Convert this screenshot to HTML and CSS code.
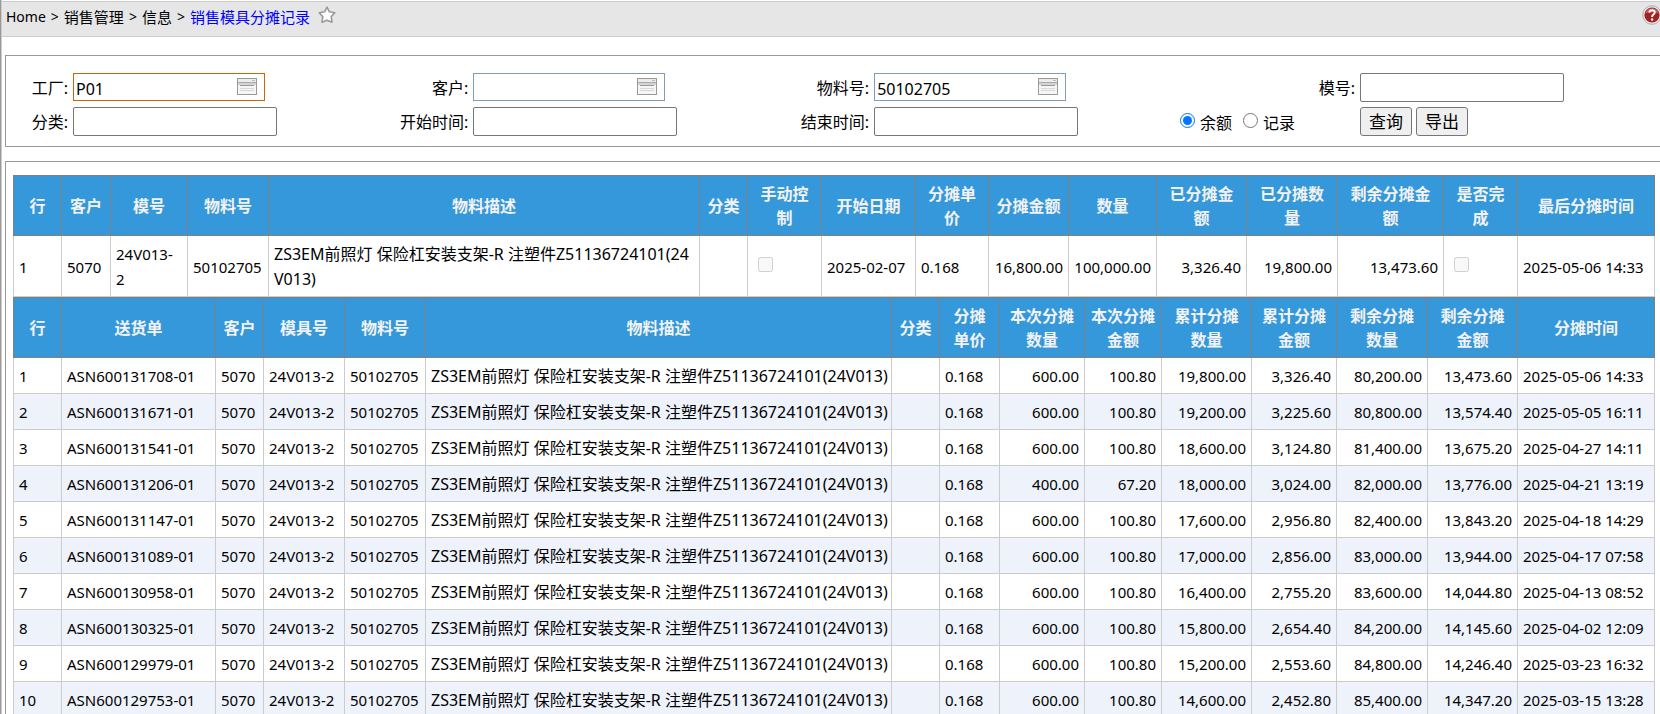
FILE: index.html
```html
<!DOCTYPE html>
<html lang="zh-CN">
<head>
    <meta charset="UTF-8">
    <meta name="viewport" content="width=device-width, initial-scale=1.0">
    <title>销售模具分摊记录</title>
    <link rel="stylesheet" href="styles.css">
</head>
<body>
    <div class="page">
        <div class="splitter"></div>
        <div class="main">
            <header class="topbar">
                <nav class="breadcrumb">
                    <a href="#" class="home">Home</a>
                    <span>&gt;</span>
                    <a href="#">销售管理</a>
                    <span>&gt;</span>
                    <a href="#">信息</a>
                    <span>&gt;</span>
                    <a href="#" class="current">销售模具分摊记录</a>
                    <button type="button" class="icon-btn star" aria-label="收藏">
                        <svg width="18" height="18" viewBox="0 0 18 18">
                            <path d="M9 1.2 L11.4 5.8 L16.8 6.8 L13.2 10.6 L14 16.2 L9 14.2 L4 16.2 L4.8 10.6 L1.2 6.8 L6.6 5.8 Z" fill="#fff" stroke="#999" stroke-width="1.6" stroke-linejoin="round"/>
                        </svg>
                    </button>
                </nav>
                <button type="button" class="icon-btn help" aria-label="帮助">
                    <svg width="20" height="20" viewBox="0 0 20 20">
                        <circle cx="10" cy="10" r="9.3" fill="#e4e7ea" stroke="#a9aeb6" stroke-width="1"/>
                        <circle cx="10" cy="10" r="7.6" fill="#a32020"/>
                        <path d="M3.4 8.5 A6.8 6.8 0 0 1 16.6 8.5 Q10 5.5 3.4 8.5 Z" fill="#c65a5a"/>
                        <path d="M7.4 7.6 Q7.6 5.2 10.1 5.2 Q12.8 5.3 12.7 7.5 Q12.6 9 11 9.8 Q10.1 10.4 10.1 12" fill="none" stroke="#fff" stroke-width="2"/>
                        <circle cx="10.1" cy="14.5" r="1.2" fill="#fff"/>
                    </svg>
                </button>
            </header>

            <form class="panel filters">
                <label for="plant">工厂:</label>
                <div class="lookup">
                    <input type="text" id="plant" class="active" value="P01">
                    <button type="button" class="icon-btn" aria-label="选择工厂"><svg width="20" height="17"><use href="#pick"/></svg></button>
                </div>
                <label for="customer">客户:</label>
                <div class="lookup">
                    <input type="text" id="customer">
                    <button type="button" class="icon-btn" aria-label="选择客户"><svg width="20" height="17"><use href="#pick"/></svg></button>
                </div>
                <label for="material">物料号:</label>
                <div class="lookup">
                    <input type="text" id="material" value="50102705">
                    <button type="button" class="icon-btn" aria-label="选择物料"><svg width="20" height="17"><use href="#pick"/></svg></button>
                </div>
                <label for="mould">模号:</label>
                <input type="text" id="mould" class="text">

                <label for="category">分类:</label>
                <input type="text" id="category" class="text">
                <label for="start">开始时间:</label>
                <input type="text" id="start" class="text">
                <label for="end">结束时间:</label>
                <input type="text" id="end" class="text">
                <div class="modes">
                    <input type="radio" name="mode" id="balance" checked><label for="balance">余额</label>
                    <input type="radio" name="mode" id="records"><label for="records">记录</label>
                </div>
                <div class="actions">
                    <button type="submit">查询</button>
                    <button type="button">导出</button>
                </div>
            </form>

            <div class="panel results">
                <table class="grid summary">
                    <colgroup>
                        <col class="w48"><col class="w49"><col class="w77"><col class="w81"><col><col class="w48"><col class="w74"><col class="w94">
                        <col class="w73"><col class="w80"><col class="w88"><col class="w90"><col class="w91"><col class="w106"><col class="w74"><col class="w137">
                    </colgroup>
                    <thead>
                        <tr>
                            <th>行</th><th>客户</th><th>模号</th><th>物料号</th><th>物料描述</th><th>分类</th><th>手动控<br>制</th><th>开始日期</th>
                            <th>分摊单<br>价</th><th>分摊金额</th><th>数量</th><th>已分摊金<br>额</th><th>已分摊数<br>量</th><th>剩余分摊金<br>额</th><th>是否完<br>成</th><th>最后分摊时间</th>
                        </tr>
                    </thead>
                    <tbody>
                        <tr>
                            <td>1</td><td>5070</td><td>24V013-<br>2</td><td>50102705</td>
                            <td class="desc">ZS3EM前照灯 保险杠安装支架-R 注塑件Z51136724101(24V013)</td>
                            <td></td><td><input type="checkbox" aria-label="手动控制" disabled></td><td>2025-02-07</td><td>0.168</td>
                            <td class="num">16,800.00</td><td class="num">100,000.00</td><td class="num">3,326.40</td><td class="num">19,800.00</td><td class="num">13,473.60</td>
                            <td><input type="checkbox" aria-label="是否完成" disabled></td><td>2025-05-06 14:33</td>
                        </tr>
                    </tbody>
                </table>

                <table class="grid detail">
                    <colgroup>
                        <col class="w48"><col class="w154"><col class="w48"><col class="w81"><col class="w81"><col><col class="w48"><col class="w60">
                        <col class="w85"><col class="w77"><col class="w90"><col class="w85"><col class="w91"><col class="w90"><col class="w137">
                    </colgroup>
                    <thead>
                        <tr>
                            <th>行</th><th>送货单</th><th>客户</th><th>模具号</th><th>物料号</th><th>物料描述</th><th>分类</th><th>分摊<br>单价</th>
                            <th>本次分摊<br>数量</th><th>本次分摊<br>金额</th><th>累计分摊<br>数量</th><th>累计分摊<br>金额</th><th>剩余分摊<br>数量</th><th>剩余分摊<br>金额</th><th>分摊时间</th>
                        </tr>
                    </thead>
                    <tbody>
                        <tr>
                            <td>1</td><td>ASN600131708-01</td><td>5070</td><td>24V013-2</td><td>50102705</td>
                            <td class="desc">ZS3EM前照灯 保险杠安装支架-R 注塑件Z51136724101(24V013)</td><td></td><td>0.168</td>
                            <td class="num">600.00</td><td class="num">100.80</td><td class="num">19,800.00</td><td class="num">3,326.40</td><td class="num">80,200.00</td><td class="num">13,473.60</td><td>2025-05-06 14:33</td>
                        </tr>
                        <tr>
                            <td>2</td><td>ASN600131671-01</td><td>5070</td><td>24V013-2</td><td>50102705</td>
                            <td class="desc">ZS3EM前照灯 保险杠安装支架-R 注塑件Z51136724101(24V013)</td><td></td><td>0.168</td>
                            <td class="num">600.00</td><td class="num">100.80</td><td class="num">19,200.00</td><td class="num">3,225.60</td><td class="num">80,800.00</td><td class="num">13,574.40</td><td>2025-05-05 16:11</td>
                        </tr>
                        <tr>
                            <td>3</td><td>ASN600131541-01</td><td>5070</td><td>24V013-2</td><td>50102705</td>
                            <td class="desc">ZS3EM前照灯 保险杠安装支架-R 注塑件Z51136724101(24V013)</td><td></td><td>0.168</td>
                            <td class="num">600.00</td><td class="num">100.80</td><td class="num">18,600.00</td><td class="num">3,124.80</td><td class="num">81,400.00</td><td class="num">13,675.20</td><td>2025-04-27 14:11</td>
                        </tr>
                        <tr>
                            <td>4</td><td>ASN600131206-01</td><td>5070</td><td>24V013-2</td><td>50102705</td>
                            <td class="desc">ZS3EM前照灯 保险杠安装支架-R 注塑件Z51136724101(24V013)</td><td></td><td>0.168</td>
                            <td class="num">400.00</td><td class="num">67.20</td><td class="num">18,000.00</td><td class="num">3,024.00</td><td class="num">82,000.00</td><td class="num">13,776.00</td><td>2025-04-21 13:19</td>
                        </tr>
                        <tr>
                            <td>5</td><td>ASN600131147-01</td><td>5070</td><td>24V013-2</td><td>50102705</td>
                            <td class="desc">ZS3EM前照灯 保险杠安装支架-R 注塑件Z51136724101(24V013)</td><td></td><td>0.168</td>
                            <td class="num">600.00</td><td class="num">100.80</td><td class="num">17,600.00</td><td class="num">2,956.80</td><td class="num">82,400.00</td><td class="num">13,843.20</td><td>2025-04-18 14:29</td>
                        </tr>
                        <tr>
                            <td>6</td><td>ASN600131089-01</td><td>5070</td><td>24V013-2</td><td>50102705</td>
                            <td class="desc">ZS3EM前照灯 保险杠安装支架-R 注塑件Z51136724101(24V013)</td><td></td><td>0.168</td>
                            <td class="num">600.00</td><td class="num">100.80</td><td class="num">17,000.00</td><td class="num">2,856.00</td><td class="num">83,000.00</td><td class="num">13,944.00</td><td>2025-04-17 07:58</td>
                        </tr>
                        <tr>
                            <td>7</td><td>ASN600130958-01</td><td>5070</td><td>24V013-2</td><td>50102705</td>
                            <td class="desc">ZS3EM前照灯 保险杠安装支架-R 注塑件Z51136724101(24V013)</td><td></td><td>0.168</td>
                            <td class="num">600.00</td><td class="num">100.80</td><td class="num">16,400.00</td><td class="num">2,755.20</td><td class="num">83,600.00</td><td class="num">14,044.80</td><td>2025-04-13 08:52</td>
                        </tr>
                        <tr>
                            <td>8</td><td>ASN600130325-01</td><td>5070</td><td>24V013-2</td><td>50102705</td>
                            <td class="desc">ZS3EM前照灯 保险杠安装支架-R 注塑件Z51136724101(24V013)</td><td></td><td>0.168</td>
                            <td class="num">600.00</td><td class="num">100.80</td><td class="num">15,800.00</td><td class="num">2,654.40</td><td class="num">84,200.00</td><td class="num">14,145.60</td><td>2025-04-02 12:09</td>
                        </tr>
                        <tr>
                            <td>9</td><td>ASN600129979-01</td><td>5070</td><td>24V013-2</td><td>50102705</td>
                            <td class="desc">ZS3EM前照灯 保险杠安装支架-R 注塑件Z51136724101(24V013)</td><td></td><td>0.168</td>
                            <td class="num">600.00</td><td class="num">100.80</td><td class="num">15,200.00</td><td class="num">2,553.60</td><td class="num">84,800.00</td><td class="num">14,246.40</td><td>2025-03-23 16:32</td>
                        </tr>
                        <tr>
                            <td>10</td><td>ASN600129753-01</td><td>5070</td><td>24V013-2</td><td>50102705</td>
                            <td class="desc">ZS3EM前照灯 保险杠安装支架-R 注塑件Z51136724101(24V013)</td><td></td><td>0.168</td>
                            <td class="num">600.00</td><td class="num">100.80</td><td class="num">14,600.00</td><td class="num">2,452.80</td><td class="num">85,400.00</td><td class="num">14,347.20</td><td>2025-03-15 13:28</td>
                        </tr>
                    </tbody>
                </table>
            </div>
        </div>
    </div>

    <svg class="sprite" width="0" height="0">
        <symbol id="pick" viewBox="0 0 20 17">
            <rect x="0.5" y="0.5" width="19" height="16" fill="#f6f6f6" stroke="#999"/>
            <rect x="1" y="1" width="18" height="3" fill="#ececec"/>
            <rect x="15" y="2" width="3" height="1" fill="#bbb"/>
            <rect x="1" y="4" width="18" height="1" fill="#aaa"/>
            <rect x="1" y="5" width="18" height="2" fill="#d4d4d4"/>
            <rect x="3" y="7" width="14" height="1" fill="#999"/>
            <rect x="3" y="10" width="14" height="1" fill="#d8d8d8"/>
            <rect x="3" y="12" width="14" height="1" fill="#d8d8d8"/>
        </symbol>
    </svg>
</body>
</html>
```
FILE: styles.css
```css
:root {
    --header-color: #3598db;
    --stripe-color: #eef2fb;
    --line-color: #ccc;
}

* {
    box-sizing: border-box;
}

body {
    margin: 0;
    font-family: "Noto Sans", "Noto Sans CJK SC", sans-serif;
    font-size: 16px;
    color: #000;
    background-color: #fff;
}

.page {
    display: flex;
    height: 100vh;
    overflow: hidden;
}

.splitter {
    flex: none;
    width: 2px;
    border-left: 1px solid #999;
    border-right: 1px solid var(--line-color);
}

.main {
    flex: 1;
    min-width: 0;
    padding-top: 1px;
}

/* top bar */
.topbar {
    display: flex;
    justify-content: space-between;
    height: 36px;
    padding-left: 4px;
    background-color: #e6e6e6;
    border-top: 1px solid var(--line-color);
    border-bottom: 1px solid var(--line-color);
}

.breadcrumb {
    display: flex;
    gap: 5px;
    font-size: 15px;
    line-height: 30px;
}

.breadcrumb a {
    color: #000;
    text-decoration: none;
}

.breadcrumb .home,
.breadcrumb span {
    font-size: 14px;
}

.breadcrumb .current {
    color: #00f;
}

.icon-btn {
    display: block;
    padding: 0;
    border: none;
    background: none;
    cursor: pointer;
}

.icon-btn svg {
    display: block;
}

.star {
    align-self: flex-start;
    margin: 4px 0 0 3px;
}

.help {
    align-self: flex-start;
    margin: 3px -2px 0 0;
}

/* framed panels */
.panel {
    margin: 18px 0 0 3px;
    border: 1px solid #999;
    border-right: none;
}

/* search form */
.filters {
    display: grid;
    grid-template-columns: 62fr 322fr 68fr 322fr 69fr 301fr 175fr 300fr;
    grid-auto-rows: 29px;
    gap: 5px;
    padding: 17px 0 10px;
}

.filters > label {
    padding-top: 1px;
    line-height: 29px;
    text-align: right;
    white-space: nowrap;
}

.filters input[type="text"] {
    font-family: inherit;
    font-size: 16px;
    border: 1px solid #767676;
    border-radius: 2px;
    outline: none;
}

.filters .text {
    width: 204px;
    height: 29px;
}

.lookup {
    position: relative;
    width: 192px;
}

.filters .lookup input {
    width: 100%;
    height: 28px;
    padding: 4px 32px 0 2px;
    border-color: #7f9db9;
    border-radius: 0;
}

.filters .lookup .active {
    border-color: #c60;
}

.lookup .icon-btn {
    position: absolute;
    top: 5px;
    right: 8px;
}

.modes {
    display: flex;
    align-items: flex-start;
    line-height: 31px;
    padding-top: 1px;
}

.modes input {
    width: 15px;
    height: 15px;
    margin: 5px 5px 0 0;
}

.modes label {
    margin-right: 11px;
}

.actions {
    display: flex;
    gap: 4px;
}

.actions button {
    height: 29px;
    padding: 0 8px;
    font-family: inherit;
    font-size: 17px;
    line-height: 27px;
    color: #000;
    background-color: #efefef;
    border: 1px solid #767676;
    border-radius: 3px;
}

/* tables */
.results {
    margin-top: 14px;
    padding: 13px 5px 10px 7px;
}

.grid {
    width: 100%;
    table-layout: fixed;
    border-collapse: collapse;
}

.grid th {
    height: 60px;
    padding: 1px 5px 0;
    color: #f2f2f2;
    font-size: 16px;
    font-weight: bold;
    line-height: 24px;
    white-space: nowrap;
    background-color: var(--header-color);
    border: 1px solid #808080;
}

.grid td {
    height: 36px;
    padding: 2px 5px 0;
    font-size: 15px;
    line-height: 25px;
    border: 1px solid var(--line-color);
}

.grid .desc {
    font-size: 16px;
}

.grid .num {
    text-align: right;
}

.summary td {
    height: 61px;
}

.summary .desc {
    word-break: break-all;
}

.summary input {
    display: block;
    width: 15px;
    height: 15px;
    margin: 0 0 5px 5px;
}

.detail td {
    white-space: nowrap;
}

.detail tbody tr:nth-child(even) {
    background-color: var(--stripe-color);
}

.w48 { width: 48px; }
.w49 { width: 49px; }
.w60 { width: 60px; }
.w73 { width: 73px; }
.w74 { width: 74px; }
.w77 { width: 77px; }
.w80 { width: 80px; }
.w81 { width: 81px; }
.w85 { width: 85px; }
.w88 { width: 88px; }
.w90 { width: 90px; }
.w91 { width: 91px; }
.w94 { width: 94px; }
.w106 { width: 106px; }
.w137 { width: 137px; }
.w154 { width: 154px; }

.sprite {
    position: absolute;
}
```
